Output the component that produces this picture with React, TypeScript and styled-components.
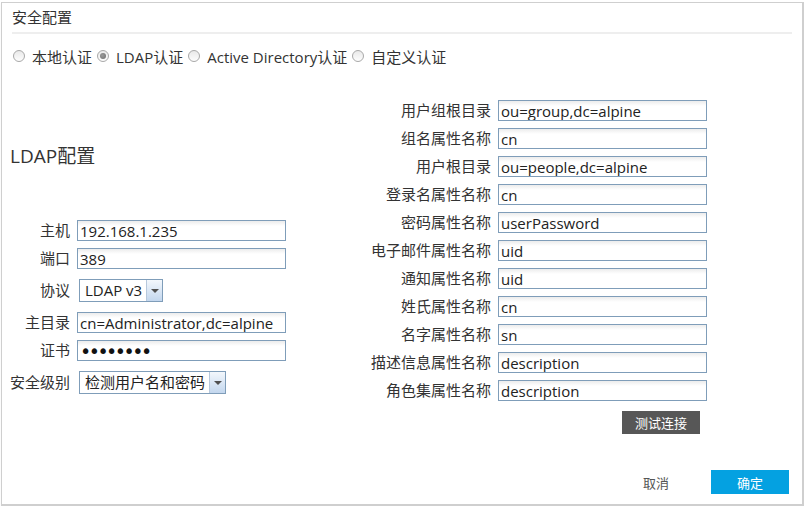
import React from "react";
import styled, { createGlobalStyle } from "styled-components";

const GlobalStyle = createGlobalStyle`
    html, body {
        margin: 0;
        padding: 0;
        background: #fff;
    }

    body {
        font-family: "Open Sans", "Noto Sans CJK SC", sans-serif;
        color: #333;
    }
`;

const Panel = styled.div`
    box-sizing: border-box;
    width: 803px;
    height: 504px;
    margin: 2px 0 0 1px;
    border: 1px solid #cfcfcf;
    border-right: 2px solid #cfcfcf;
    border-bottom: 2px solid #cfcfcf;
    box-shadow: 0 2px 2px rgba(0, 0, 0, 0.04);
    background: #fff;
    display: flex;
    flex-direction: column;
`;

const Title = styled.div`
    height: 29px;
    line-height: 29px;
    padding-left: 10px;
    font-size: 15px;
    color: #333;
`;

const Divider = styled.div`
    height: 2px;
    margin: 0 10px;
    background: #eeeeee;
`;

const RadioRow = styled.div`
    height: 44px;
    display: flex;
    align-items: center;
    padding-left: 11px;
    font-size: 15px;
`;

const RadioOption = styled.label`
    display: flex;
    align-items: center;
    gap: 7px;
    margin-right: 5px;
    color: #333;
    cursor: pointer;
`;

const RadioDot = styled.span<{ $checked?: boolean }>`
    position: relative;
    box-sizing: border-box;
    width: 12px;
    height: 12px;
    border-radius: 50%;
    border: 1px solid #a8a8a8;
    background: linear-gradient(#e9e9e9, #fdfdfd);

    &::after {
        content: "";
        display: ${(p) => (p.$checked ? "block" : "none")};
        position: absolute;
        left: 2px;
        top: 2px;
        width: 6px;
        height: 6px;
        border-radius: 50%;
        background: radial-gradient(circle at 40% 40%, #9a9a9a, #6e6e6e);
    }
`;

const Body = styled.div`
    flex: 1;
    display: flex;
    padding-left: 8px;
`;

const LeftColumn = styled.div`
    width: 350px;
    display: flex;
    flex-direction: column;
`;

const SectionHeading = styled.div`
    margin-top: 65px;
    height: 26px;
    line-height: 26px;
    font-size: 19px;
    color: #333;
`;

const FormList = styled.div<{ $top: number }>`
    display: flex;
    flex-direction: column;
    gap: 7px;
    margin-top: ${(p) => p.$top}px;
`;

const FieldRow = styled.div<{ $select?: boolean }>`
    display: flex;
    align-items: center;
    gap: 7px;
    margin: ${(p) => (p.$select ? "3px 0" : "0")};
`;

const FieldLabel = styled.div<{ $width: number }>`
    width: ${(p) => p.$width}px;
    text-align: right;
    font-size: 15px;
    line-height: 21px;
    color: #333;
    white-space: nowrap;
`;

const TextInput = styled.input`
    box-sizing: border-box;
    width: 209px;
    height: 21px;
    margin: 0;
    padding: 0 1px 0 2px;
    border: 1px solid #7f9db9;
    background: linear-gradient(#ececec, #ffffff 5px);
    font-family: "Open Sans", "Noto Sans CJK SC", sans-serif;
    font-size: 15px;
    color: #222;
    outline: none;
`;

const PasswordInput = styled(TextInput)`
    font-family: "DejaVu Sans", sans-serif;
    font-size: 19px;
    letter-spacing: -2.5px;
    color: #111;
`;

const SelectBox = styled.div<{ $width: number }>`
    box-sizing: border-box;
    width: ${(p) => p.$width}px;
    height: 23px;
    margin-left: 2px;
    display: flex;
    border: 1px solid #7f9db9;
    background: #fff;
    cursor: pointer;
`;

const SelectValue = styled.span`
    flex: 1;
    padding-left: 5px;
    line-height: 21px;
    font-size: 15px;
    color: #222;
    white-space: nowrap;
    overflow: hidden;
`;

const SelectArrow = styled.span`
    width: 15px;
    display: flex;
    align-items: center;
    justify-content: center;
    border-left: 1px solid #b7c8dc;
    background: linear-gradient(#f3f7fc, #c3d7ee);

    &::after {
        content: "";
        border-left: 4px solid transparent;
        border-right: 4px solid transparent;
        border-top: 4px solid #505050;
    }
`;

const RightColumn = styled.div`
    display: flex;
    flex-direction: column;
    padding-top: 22px;
`;

const TestButton = styled.button`
    align-self: flex-end;
    width: 78px;
    height: 23px;
    margin: 10px 7px 0 0;
    border: none;
    background: #575757;
    color: #fff;
    font-family: "Noto Sans CJK SC", sans-serif;
    font-size: 13px;
    cursor: pointer;
`;

const Footer = styled.div`
    display: flex;
    justify-content: flex-end;
    gap: 16px;
    padding: 0 13px 10px 0;
`;

const FooterButton = styled.button<{ $primary?: boolean }>`
    width: 78px;
    height: 24px;
    border: none;
    background: ${(p) => (p.$primary ? "#04a1e1" : "transparent")};
    color: ${(p) => (p.$primary ? "#fff" : "#555")};
    font-family: "Noto Sans CJK SC", sans-serif;
    font-size: 13px;
    cursor: pointer;
`;

const authModes = ["本地认证", "LDAP认证", "Active Directory认证", "自定义认证"];

const ldapFields: [string, string][] = [
    ["用户组根目录", "ou=group,dc=alpine"],
    ["组名属性名称", "cn"],
    ["用户根目录", "ou=people,dc=alpine"],
    ["登录名属性名称", "cn"],
    ["密码属性名称", "userPassword"],
    ["电子邮件属性名称", "uid"],
    ["通知属性名称", "uid"],
    ["姓氏属性名称", "cn"],
    ["名字属性名称", "sn"],
    ["描述信息属性名称", "description"],
    ["角色集属性名称", "description"],
];

const Select = ({ value, width }: { value: string; width: number }) => (
    <SelectBox $width={width}>
        <SelectValue>{value}</SelectValue>
        <SelectArrow />
    </SelectBox>
);

const App = () => {
    return (
        <>
            <GlobalStyle />
            <Panel>
                <Title>安全配置</Title>
                <Divider />

                <RadioRow>
                    {authModes.map((mode) => (
                        <RadioOption key={mode}>
                            <RadioDot $checked={mode === "LDAP认证"} />
                            {mode}
                        </RadioOption>
                    ))}
                </RadioRow>

                <Body>
                    <LeftColumn>
                        <SectionHeading>LDAP配置</SectionHeading>
                        <FormList $top={51}>
                            <FieldRow>
                                <FieldLabel $width={60}>主机</FieldLabel>
                                <TextInput readOnly defaultValue="192.168.1.235" />
                            </FieldRow>
                            <FieldRow>
                                <FieldLabel $width={60}>端口</FieldLabel>
                                <TextInput readOnly defaultValue="389" />
                            </FieldRow>
                            <FieldRow $select>
                                <FieldLabel $width={60}>协议</FieldLabel>
                                <Select value="LDAP v3" width={84} />
                            </FieldRow>
                            <FieldRow>
                                <FieldLabel $width={60}>主目录</FieldLabel>
                                <TextInput readOnly defaultValue="cn=Administrator,dc=alpine" />
                            </FieldRow>
                            <FieldRow>
                                <FieldLabel $width={60}>证书</FieldLabel>
                                <PasswordInput type="password" readOnly defaultValue="12345678" />
                            </FieldRow>
                            <FieldRow $select>
                                <FieldLabel $width={60}>安全级别</FieldLabel>
                                <Select value="检测用户名和密码" width={147} />
                            </FieldRow>
                        </FormList>
                    </LeftColumn>

                    <RightColumn>
                        <FormList $top={0}>
                            {ldapFields.map(([label, value]) => (
                                <FieldRow key={label}>
                                    <FieldLabel $width={131}>{label}</FieldLabel>
                                    <TextInput readOnly defaultValue={value} />
                                </FieldRow>
                            ))}
                        </FormList>
                        <TestButton>测试连接</TestButton>
                    </RightColumn>
                </Body>

                <Footer>
                    <FooterButton>取消</FooterButton>
                    <FooterButton $primary>确定</FooterButton>
                </Footer>
            </Panel>
        </>
    );
};

export default App;
